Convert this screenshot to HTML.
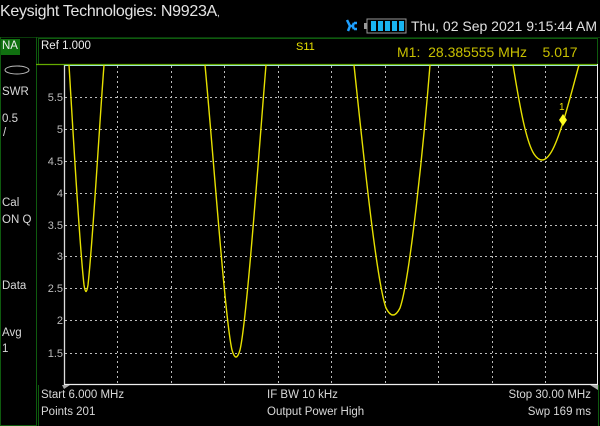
<!DOCTYPE html>
<html><head><style>
html,body{margin:0;padding:0;background:#000;width:600px;height:426px;overflow:hidden}
body{position:relative;font-family:"Liberation Sans",sans-serif;color:#d8d8d8}
.a{position:absolute;white-space:nowrap}
.s{font-size:11.5px}
</style></head><body>
<div class="a" style="left:0;top:3px;font-size:16px;color:#e4e4e4;letter-spacing:-0.3px">Keysight Technologies: N9923A<span style="font-size:10px">,</span></div>
<svg class="a" style="left:344px;top:17px" width="64" height="18">
<path d="M3,3 L6,9 L10,9 M6,9 L4,14 M10,6 L13,6 M10,12 L13,12 M10,6 Q8,9 10,12" stroke="#1ea0ff" stroke-width="2.5" fill="none"/>
<rect x="23" y="2" width="39" height="14" fill="none" stroke="#999" stroke-width="1"/>
<rect x="20" y="6" width="3" height="6" fill="#999"/>
<rect x="27" y="4" width="5" height="10" fill="#19b4f0"/><rect x="34" y="4" width="5" height="10" fill="#19b4f0"/><rect x="41" y="4" width="5" height="10" fill="#19b4f0"/><rect x="48" y="4" width="5" height="10" fill="#19b4f0"/><rect x="55" y="4" width="5" height="10" fill="#19b4f0"/>
</svg>
<div class="a" style="left:411px;top:18px;font-size:14px;color:#e0e0e0">Thu, 02 Sep 2021 9:15:44 AM</div>
<div class="a" style="left:0;top:37px;width:600px;height:1px;background:#0a3a0a"></div>
<!-- left panel -->
<div class="a" style="left:0;top:37px;width:35px;height:388px;border:1px solid #0e5a0e;border-top:none"></div>
<div class="a" style="left:1px;top:39px;width:19px;height:16px;background:#107010"></div>
<div class="a s" style="left:2px;top:40px;color:#eee">NA</div>
<svg class="a" style="left:3px;top:64px" width="28" height="12"><ellipse cx="14" cy="6" rx="12" ry="4" fill="none" stroke="#bbb" stroke-width="1"/><path d="M14,2 l3,0" stroke="#bbb"/></svg>
<div class="a s" style="left:2px;top:86px">SWR</div>
<div class="a s" style="left:2px;top:113px">0.5</div>
<div class="a s" style="left:3px;top:127px">/</div>
<div class="a s" style="left:2px;top:197px">Cal</div>
<div class="a s" style="left:2px;top:214px">ON Q</div>
<div class="a s" style="left:2px;top:280px">Data</div>
<div class="a s" style="left:2px;top:327px">Avg</div>
<div class="a s" style="left:2px;top:343px">1</div>
<!-- header -->
<div class="a" style="left:38px;top:38px;width:558px;height:25px;border:1px solid #0e5a0e"></div>
<div class="a s" style="left:41px;top:40px;color:#eee">Ref 1.000</div>
<div class="a" style="left:296px;top:41px;font-size:11px;color:#e8e000">S11</div>
<div class="a" style="left:397px;top:44px;font-size:14px;color:#c8c000">M1:&nbsp; 28.385555 MHz&nbsp;&nbsp;&nbsp; 5.017</div>
<!-- plot -->
<svg class="a" style="left:0;top:0" width="600" height="426">
<g stroke="#bbb" stroke-width="1" stroke-dasharray="2,3" fill="none">
<path d="M117.5,66V384M171.5,66V384M224.5,66V384M278.5,66V384M331.5,66V384M385.5,66V384M438.5,66V384M492.5,66V384M545.5,66V384"/>
<path d="M65,97.5H597M65,129.5H597M65,161.5H597M65,193.5H597M65,225.5H597M65,256.5H597M65,288.5H597M65,320.5H597M65,353.5H597"/>
</g>
<path d="M64.5,65V385" stroke="#ddd" stroke-width="1.3"/>
<path d="M64,384.5H597" stroke="#eee" stroke-width="1.3"/>
<path d="M64,65.5H597" stroke="#aee" stroke-width="1"/>
<path d="M36,64.5H598" stroke="#6a0" stroke-width="1.2"/>
<path d="M597.5,64V385" stroke="#eee" stroke-width="1"/>
<path d="M62,385 l8,0 l-6,4z M590,385 l8,0 l0,5z" fill="#aaa"/>
<g stroke="#e6e000" stroke-width="1.4" fill="none">
<path d="M69,65 C73,130 79,240 84,285 Q86,298 88,285 C93,240 99,130 104,65"/>
<path d="M205,65 C213,150 225,320 232,350 Q236,364 240,350 C247,320 259,150 266,65"/>
<path d="M354,65 C362,140 376,280 386,308 Q393,322 400,308 C410,280 424,140 430,65"/>
<path d="M513,65 C518,95 525,140 534,154 Q542,166 550,154 C560,140 572,90 579,65"/>
</g>
<path d="M563,114 l4,6 l-4,6 l-4,-6z" fill="#ffff20"/>
<text x="559" y="110" font-size="10" fill="#eee000" font-family="Liberation Sans">1</text>
<g font-family="Liberation Sans" font-size="11" fill="#bbb" text-anchor="end">
<text x="63" y="101">5.5</text><text x="63" y="133">5</text><text x="63" y="165">4.5</text><text x="63" y="197">4</text><text x="63" y="229">3.5</text><text x="63" y="260">3</text><text x="63" y="292">2.5</text><text x="63" y="324">2</text><text x="63" y="357">1.5</text>
</g>
</svg>
<!-- bottom -->
<div class="a" style="left:38px;top:385px;width:559px;height:41px;border-left:1px solid #0e5a0e;border-right:1px solid #0e5a0e"></div>
<div class="a s" style="left:41px;top:389px">Start 6.000 MHz</div>
<div class="a s" style="left:41px;top:406px">Points 201</div>
<div class="a s" style="left:267px;top:389px">IF BW 10 kHz</div>
<div class="a s" style="left:267px;top:406px">Output Power High</div>
<div class="a s" style="right:9px;top:389px">Stop 30.00 MHz</div>
<div class="a s" style="right:9px;top:406px">Swp 169 ms</div>
</body></html>
